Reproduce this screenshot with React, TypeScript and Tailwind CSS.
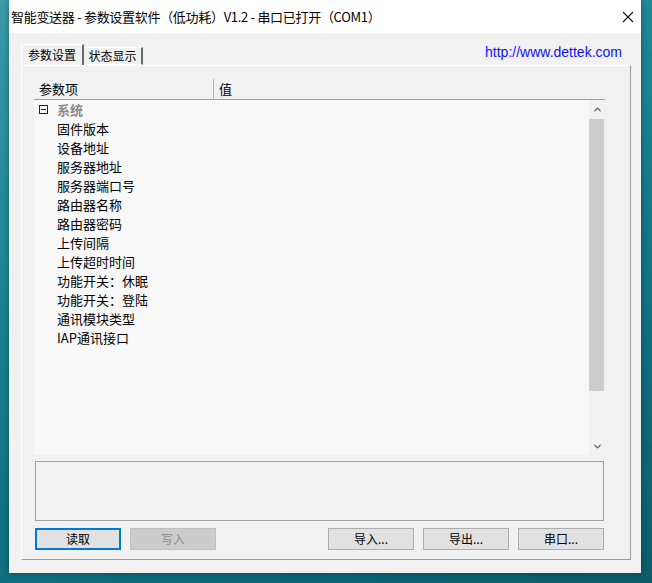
import { ChevronUp, ChevronDown } from 'lucide-react'

const cjk = "font-['Noto_Sans_CJK_SC','Noto_Sans',sans-serif]"

const items = [
  '固件版本',
  '设备地址',
  '服务器地址',
  '服务器端口号',
  '路由器名称',
  '路由器密码',
  '上传间隔',
  '上传超时时间',
  '功能开关：休眠',
  '功能开关：登陆',
  '通讯模块类型',
  'IAP通讯接口',
]

function Btn({ label, focused, disabled }: { label: string; focused?: boolean; disabled?: boolean }) {
  const base = 'w-[86px] h-[22px] flex items-center justify-center text-[12px] leading-none'
  if (disabled) return <div className={`${base} bg-[#cccccc] border border-[#bfbfbf] text-[#8d8d8d]`}>{label}</div>
  if (focused) return <div className={`${base} bg-[#e1e1e1] border-2 border-[#0078d7] text-black`}>{label}</div>
  return <div className={`${base} bg-[#e1e1e1] border border-[#adadad] text-black`}>{label}</div>
}

export default function App() {
  return (
    <div className={`w-[652px] h-[583px] flex pl-[9px] pr-[11px] pb-[10px] bg-[linear-gradient(160deg,#3a9aa6_0%,#1b8593_35%,#0f6f7e_70%,#0b5c6a_100%)] ${cjk}`}>
      <div className="flex-1 flex flex-col bg-white shadow-[0_0_6px_rgba(0,0,0,0.35)]">
        {/* title bar */}
        <div className="h-[33px] flex items-center pl-[2px] pr-[6px] bg-white">
          <span className="text-[13px] tracking-[-0.3px] text-black whitespace-nowrap">智能变送器 - 参数设置软件（低功耗）V1.2 - 串口已打开（COM1）</span>
          <svg className="ml-auto mr-[1px]" width="12" height="12" viewBox="0 0 12 12">
            <path d="M1 1L11 11M11 1L1 11" stroke="#111" strokeWidth="1.1" fill="none" />
          </svg>
        </div>

        {/* client */}
        <div className="flex-1 flex flex-col bg-[#f1f1f1] pt-[11px] pl-[12px] pr-[10px] pb-[13px]">
          {/* tabs */}
          <div className="h-[21px] flex items-end">
            <div className="h-[21px] w-[63px] flex items-center justify-center text-[12px] text-black border-t border-l border-white border-r-2 border-r-[#6b6b6b] bg-[#f1f1f1]">
              参数设置
            </div>
            <div className="h-[18px] w-[59px] flex items-center justify-center text-[12px] text-black border-t border-white border-r-2 border-r-[#6b6b6b] border-b border-b-white">
              状态显示
            </div>
            <a className="ml-auto self-start mr-[9px] text-[14px] leading-[16px] text-[#1010ff] font-['Liberation_Sans',sans-serif]">
              http://www.dettek.com
            </a>
          </div>

          {/* panel */}
          <div className="flex-1 flex flex-col border border-white border-r-[#9a9a9a] border-b-[#9a9a9a] pt-[13px] pl-[12px] pr-[25px] pb-[9px]">
            {/* list header */}
            <div className="h-[21px] flex items-center border-b border-[#a0a0a0] text-[13px] text-black">
              <div className="w-[180px] h-full flex items-center pl-[5px] border-r border-[#b4b4b4]">参数项</div>
              <div className="pl-[5px]">值</div>
            </div>
            {/* list body */}
            <div className="flex-1 flex bg-[#f8f8f8]">
              <div className="flex-1 flex flex-col text-[13px] text-black">
                <div className="h-[19px] flex items-center pl-[5px]">
                  <div className="w-[9px] h-[9px] border border-[#222] flex items-center justify-center">
                    <div className="w-[5px] h-px bg-[#222]" />
                  </div>
                  <span className="ml-[9px] font-bold text-[#8a8a8a]">系统</span>
                </div>
                {items.map((t) => (
                  <div key={t} className="h-[19px] flex items-center pl-[23px]">
                    {t}
                  </div>
                ))}
              </div>
              {/* scrollbar */}
              <div className="w-[16px] flex flex-col bg-[#f1f1f1]">
                <div className="h-[19px] flex items-center justify-center">
                  <ChevronUp size={11} strokeWidth={3} color="#606060" />
                </div>
                <div className="h-[272px] bg-[#cdcdcd] mr-[1px]" />
                <div className="flex-1" />
                <div className="h-[17px] flex items-center justify-center">
                  <ChevronDown size={11} strokeWidth={3} color="#606060" />
                </div>
              </div>
            </div>

            {/* message box */}
            <div className="h-[60px] mt-[6px] ml-[1px] mr-[1px] border border-[#a0a0a0] bg-[#f1f1f1]" />

            {/* buttons */}
            <div className="mt-[7px] ml-[1px] mr-[1px] flex gap-[9px]">
              <Btn label="读取" focused />
              <Btn label="写入" disabled />
              <div className="ml-auto flex gap-[9px]">
                <Btn label="导入..." />
                <Btn label="导出..." />
                <Btn label="串口..." />
              </div>
            </div>
          </div>
        </div>
      </div>
    </div>
  )
}
